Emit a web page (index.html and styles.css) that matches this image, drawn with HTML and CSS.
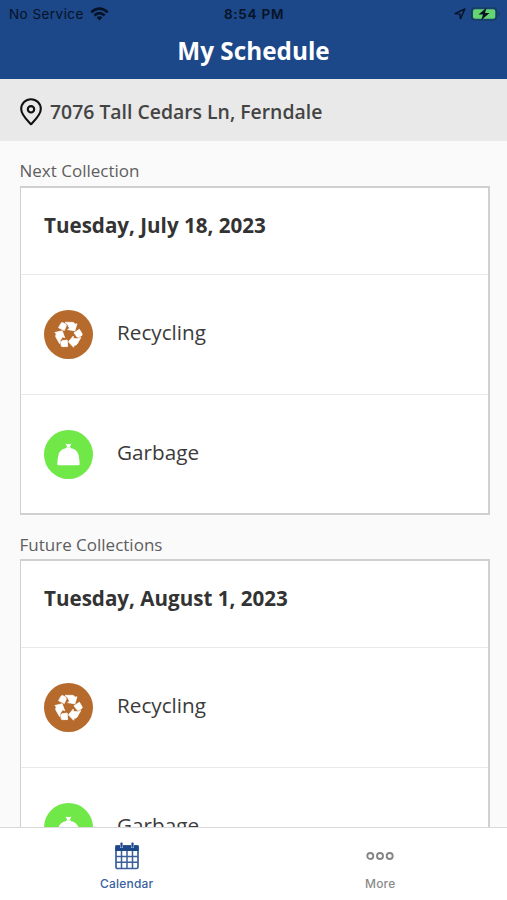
FILE: index.html
```html
<!DOCTYPE html>
<html lang="en">
<head>
<meta charset="utf-8">
<title>My Schedule</title>
<link rel="stylesheet" href="styles.css">
</head>
<body>
<svg class="defs" aria-hidden="true">
  <symbol id="recycle" viewBox="-24.5 -24.5 49 49">
    <g id="arm" stroke="#fff" stroke-width=".7" stroke-linejoin="round"><path d="M-3.500-12.200H4Q5.600-12.200 6.500-10.300L8.500-10.800 6.400-3.600-.9-4.900 1-6.300-1-10Z"/><path d="M-6-12-2.500-10.300-2.200-8.600-4.200-3.900-10-6.800-7.500-11.300Q-7-12.100-6-12Z"/></g>
    <use href="#arm" transform="rotate(120)"/>
    <use href="#arm" transform="rotate(240)"/>
  </symbol>
  <symbol id="bag" viewBox="-24.5 -24.5 49 49">
    <path d="M-3-11Q0-10 3-11L1.300-7.500H-1.300Z"/>
    <path d="M-2-7.200H2L2.500-6.200C6-5.800 9.500-3 10 .5 10.700 4 11.200 7.500 11.200 9.500Q11.200 10.800 9.900 10.800H-9.900Q-11.400 10.800-11.200 9.200-11 4-10 .5C-9.500-3-6-5.800-2.500-6.200Z"/>
  </symbol>
</svg>
<div class="screen">
  <header class="header">
    <div class="status">
      <div class="carrier"><span>No Service</span>
        <svg width="19" height="14" viewBox="0 0 19 14"><g fill="none" stroke="#061225" stroke-width="2.600"><path d="M1.300 5.300Q9.500-2 17.700 5.300M4.400 8.400Q9.500 4 14.600 8.400"/></g><path d="M6.600 10.500Q9.500 8.200 12.400 10.500L9.500 13.500Z" fill="#061225"/></svg>
      </div>
      <div class="clock">8:54 PM</div>
      <div class="power">
        <svg width="12" height="12" viewBox="0 0 12 12"><path d="M1 5.600 10.800 1 6.500 10.800 5.800 6.100Z" fill="none" stroke="#061225" stroke-width="1.400" stroke-linejoin="round"/></svg>
        <svg width="30" height="14" viewBox="0 0 30 14"><rect x=".6" y="1" width="25" height="12" rx="3.500" fill="none" stroke="#173c55" stroke-width="1.200"/><rect x="2" y="2.300" width="22.200" height="9.400" rx="2" fill="#66d46f"/><path d="M27.300 5v4q1.500-.5 1.500-2t-1.500-2" fill="#143a6c"/><path d="M15.500.7 7.500 7.600H12L10.200 13.200 18.500 6H14Z" fill="#061225"/></svg>
      </div>
    </div>
    <h1>My Schedule</h1>
  </header>
  <div class="address">
    <svg width="22" height="28" viewBox="0 0 22 28"><path d="M11 26.200C7.500 22.500 1.200 17 1.200 11A9.800 9.800 0 0 1 20.800 11C20.800 17 14.500 22.500 11 26.200Z" fill="none" stroke="#111" stroke-width="2.100" stroke-linejoin="round"/><circle cx="11" cy="11.300" r="3.200" fill="none" stroke="#111" stroke-width="2.100"/></svg>
    <span>7076 Tall Cedars Ln, Ferndale</span>
  </div>
  <main class="content">
    <h2>Next Collection</h2>
    <section class="card">
      <h3>Tuesday, July 18, 2023</h3>
      <div class="row"><svg class="icon brown"><use href="#recycle"/></svg><span>Recycling</span></div>
      <div class="row"><svg class="icon green"><use href="#bag"/></svg><span>Garbage</span></div>
    </section>
    <h2>Future Collections</h2>
    <section class="card">
      <h3>Tuesday, August 1, 2023</h3>
      <div class="row"><svg class="icon brown"><use href="#recycle"/></svg><span>Recycling</span></div>
      <div class="row"><svg class="icon green"><use href="#bag"/></svg><span>Garbage</span></div>
    </section>
  </main>
  <nav class="tabs">
    <a class="tab active">
      <svg width="26" height="28" viewBox="0 0 26 28"><rect x="2" y="4" width="22" height="22.500" rx="1.500" fill="none" stroke="#3a5f9b" stroke-width="1.700"/><path d="M1.300 3.300H24.700V9H1.300Z" fill="#1c4789"/><path d="M2 14.500H24M2 20.300H24M7.500 9V26M13 9V26M18.500 9V26" stroke="#3a5f9b" stroke-width="1.500"/><path d="M7.500 1V6M18.500 1V6" stroke="#a9bbd8" stroke-width="3"/><path d="M7.500.6V5.500M18.500.6V5.500" stroke="#1c4789" stroke-width="1.700"/></svg>
      <span>Calendar</span>
    </a>
    <a class="tab">
      <svg width="28" height="28" viewBox="0 0 28 28"><g fill="none" stroke="#858585" stroke-width="1.900"><circle cx="4.300" cy="14" r="3"/><circle cx="14" cy="14" r="3"/><circle cx="23.700" cy="14" r="3"/></g></svg>
      <span>More</span>
    </a>
  </nav>
</div>
</body>
</html>
```
FILE: styles.css
```css
* { box-sizing: border-box; }
body { margin: 0; font-family: "Open Sans", sans-serif; color: #3b3b3b; }
h1, h2, h3 { margin: 0; }
svg { display: block; flex: none; }
.defs { position: absolute; width: 0; height: 0; }
.screen { height: 900px; display: flex; flex-direction: column; overflow: hidden; background: #fafafa; }
.header { height: 79px; flex: none; background: #1c4789; }
.status { height: 28px; display: grid; grid-template-columns: 1fr auto 1fr; align-items: center; padding: 0 6px 0 9px; font: 500 13.500px/28px Inter, sans-serif; color: #061225; }
.carrier { display: flex; align-items: center; gap: 6px; font-weight: 400; letter-spacing: .45px; }
.clock { font-weight: 600; letter-spacing: .75px; padding-right: 2px; }
.power { display: flex; align-items: center; justify-content: flex-end; gap: 5px; }
h1 { color: #fff; font-size: 24.300px; font-weight: 700; line-height: 46px; text-align: center; }
.address { height: 62px; flex: none; display: flex; align-items: center; gap: 8px; padding-left: 20px; padding-top: 3px; background: #e9e9e9; font-size: 19.400px; font-weight: 600; color: #444; }
.content { flex: 1; min-height: 0; overflow: hidden; padding: 0 17px 0 20px; }
h2 { height: 45px; padding-top: 16px; font-size: 17px; font-weight: 400; line-height: 28px; color: #5e5e5e; margin-left: -.5px; }
.card { height: 329px; border: 1px solid #d0d0d0; border-width: 2px 2px 2px 1px; background: #fff; }
.card + h2 { height: 44px; }
h3 { height: 86px; padding: 0 23px; font-size: 20.600px; line-height: 74px; color: #333; }
.row { height: 120px; display: flex; align-items: center; gap: 24px; padding-left: 23px; border-top: 1px solid #e9e9e9; font-size: 20.700px; }
.row span { padding-bottom: 5px; }
.icon { width: 49px; height: 49px; border-radius: 50%; fill: #fff; }
.brown { background: #b66a2c; }
.green { background: #70e848; }
.tabs { height: 73px; flex: none; display: grid; grid-template-columns: 1fr 1fr; border-top: 1px solid #d9d9d9; background: #fff; }
.tab { display: flex; flex-direction: column; align-items: center; padding-top: 14px; font: 500 12px/16px Inter, sans-serif; letter-spacing: .2px; color: #8b8b8b; }
.tab span { margin-top: 6px; }
.active { color: #3a5f9f; }
```
